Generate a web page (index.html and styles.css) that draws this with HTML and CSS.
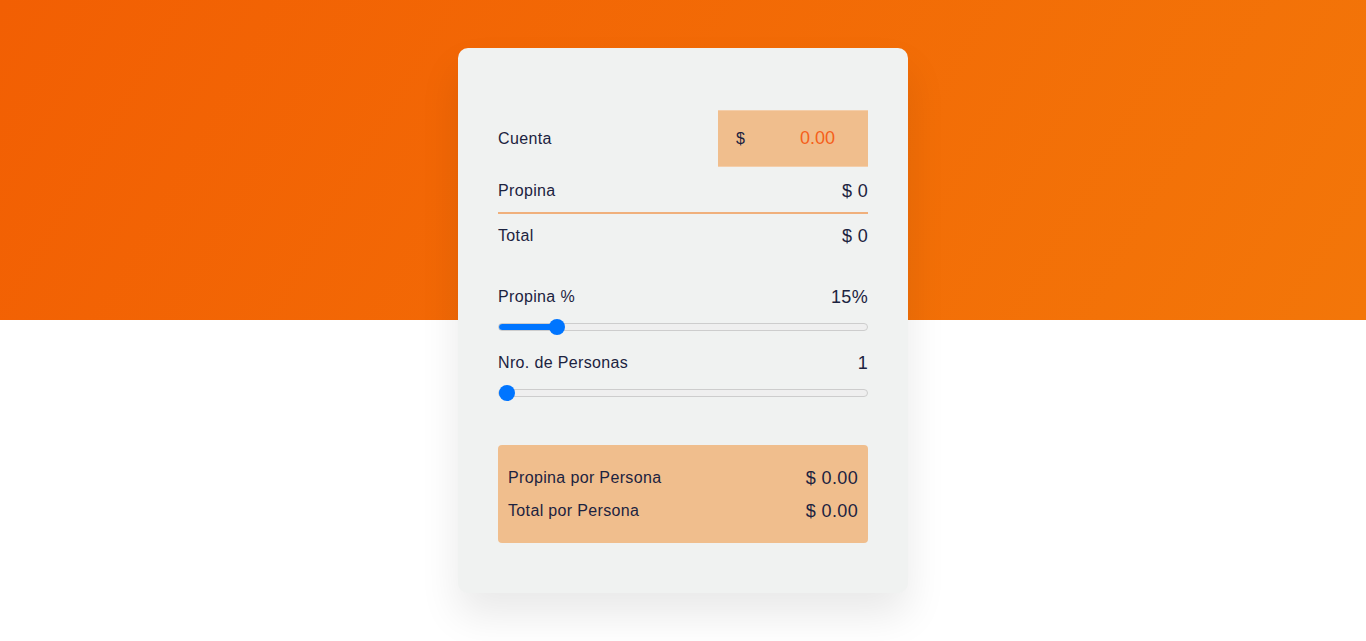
FILE: index.html
```html
<!DOCTYPE html>
<html lang="es">
<head>
<meta charset="utf-8">
<title>Calculadora de Propinas</title>
<link rel="stylesheet" href="styles.css">
</head>
<body>
<main class="card">
  <div class="row row-bill">
    <label class="label" for="bill">Cuenta</label>
    <div class="bill-box">
      <span class="currency">$</span>
      <input id="bill" class="bill-input" type="text" placeholder="0.00">
    </div>
  </div>
  <div class="row row-line">
    <span class="label">Propina</span>
    <span class="value">$ 0</span>
  </div>
  <div class="row row-total">
    <span class="label">Total</span>
    <span class="value">$ 0</span>
  </div>

  <div class="slider-head first">
    <span class="label">Propina %</span>
    <span class="value">15%</span>
  </div>
  <input class="range" type="range" min="1" max="100" value="15" style="--fill: 58px">

  <div class="slider-head">
    <span class="label">Nro. de Personas</span>
    <span class="value">1</span>
  </div>
  <input class="range" type="range" min="1" max="50" value="1" style="--fill: 8px">

  <div class="result">
    <div class="result-row">
      <span class="label">Propina por Persona</span>
      <span class="value">$ 0.00</span>
    </div>
    <div class="result-row">
      <span class="label">Total por Persona</span>
      <span class="value">$ 0.00</span>
    </div>
  </div>
</main>
</body>
</html>
```

FILE: styles.css
```css
* { box-sizing: border-box; }

html, body { height: 100%; }

body {
  margin: 0;
  font-family: "Liberation Sans", Arial, sans-serif;
  color: #1c2340;
  letter-spacing: 0.35px;
  background-color: #ffffff;
  background-image: linear-gradient(120deg, #f25f03 0%, #f37609 100%);
  background-repeat: no-repeat;
  background-size: 100% 320px;
  display: flex;
  justify-content: center;
  align-items: flex-start;
  padding-top: 48px;
}

.card {
  width: 450px;
  background: #f0f2f1;
  border-radius: 10px;
  padding: 62px 40px 50px;
  box-shadow: 0 22px 40px rgba(0, 0, 0, 0.09);
}

.row {
  display: flex;
  justify-content: space-between;
  align-items: center;
  height: 44px;
}

.row-bill { height: 57px; }

.row-line {
  border-bottom: 2px solid #f0b07c;
  height: 47px;
  padding-top: 2px;
}

.row-total { height: 43px; }

.label { font-size: 16px; line-height: 22px; }

.value { font-size: 18px; line-height: 22px; }

.bill-box {
  width: 150px;
  height: 57px;
  background: #f0be8d;
  border-top: 1px solid #f4ceaa;
  border-bottom: 1px solid #f4ceaa;
  display: flex;
  align-items: center;
  padding: 0 33px 0 18px;
}

.currency { font-size: 16px; }

.bill-input {
  flex: 1;
  min-width: 0;
  border: 0;
  background: transparent;
  text-align: right;
  font-family: inherit;
  font-size: 18px;
  letter-spacing: 0;
  color: #f5601a;
  padding: 0;
  outline: none;
}

.bill-input::placeholder { color: #f5601a; opacity: 1; }

.slider-head {
  display: flex;
  justify-content: space-between;
  align-items: center;
  height: 22px;
  margin-top: 17px;
}

.slider-head.first { margin-top: 29px; }

.range {
  -webkit-appearance: none;
  appearance: none;
  display: block;
  width: 100%;
  height: 16px;
  margin: 11px 0 0;
  padding: 0;
  background: transparent;
  outline: none;
}

.range::-webkit-slider-runnable-track {
  height: 8px;
  border: 1px solid #cdcdcd;
  border-radius: 4px;
  background: linear-gradient(to right, #0075ff var(--fill), #efefef var(--fill));
}

.range::-webkit-slider-thumb {
  -webkit-appearance: none;
  appearance: none;
  width: 16px;
  height: 16px;
  margin-top: -5px;
  border-radius: 50%;
  background: #0075ff;
  border: 0;
}

.result {
  margin-top: 44px;
  background: #f0be8d;
  border-radius: 4px;
  padding: 16px 10px;
}

.result-row {
  display: flex;
  justify-content: space-between;
  align-items: center;
  height: 33px;
}
```
